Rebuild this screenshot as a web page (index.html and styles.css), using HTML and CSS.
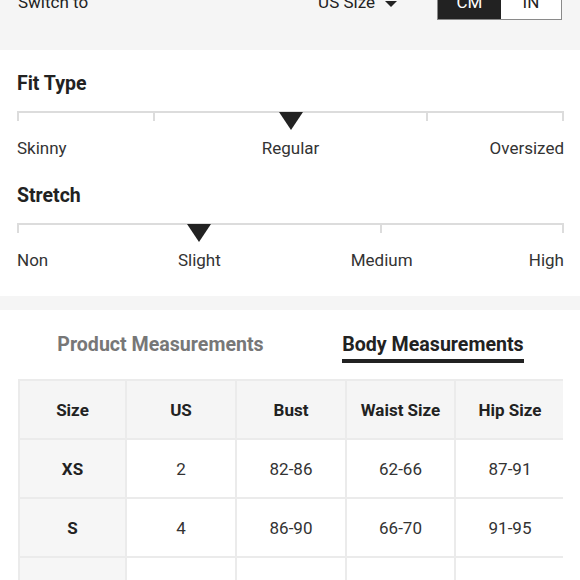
FILE: index.html
```html
<!DOCTYPE html>
<html lang="en">
<head>
<meta charset="utf-8">
<title>Size Guide</title>
<link rel="stylesheet" href="styles.css">
</head>
<body>
<div class="top">
  <div class="switch-row">
    <span class="switch-label">Switch to</span>
    <span class="size-select">US Size <span class="caret"></span></span>
    <div class="unit-toggle">
      <span class="unit unit-active">CM</span>
      <span class="unit">IN</span>
    </div>
  </div>
</div>

<div class="fit">
  <div class="group">
    <h2 class="group-title">Fit Type</h2>
    <div class="track">
      <span class="seg"></span><span class="seg"></span><span class="seg"></span><span class="seg seg-last"></span>
      <span class="marker marker-half"></span>
    </div>
    <div class="labels labels-fit">
      <span class="lbl lbl-start">Skinny</span>
      <span class="lbl lbl-mid2">Regular</span>
      <span class="lbl lbl-end8">Oversized</span>
    </div>
  </div>

  <div class="group">
    <h2 class="group-title">Stretch</h2>
    <div class="track">
      <span class="seg"></span><span class="seg"></span><span class="seg seg-last"></span>
      <span class="marker marker-third"></span>
    </div>
    <div class="labels labels-stretch">
      <span class="lbl lbl-start">Non</span>
      <span class="lbl lbl-s1">Slight</span>
      <span class="lbl lbl-s2">Medium</span>
      <span class="lbl lbl-end6">High</span>
    </div>
  </div>
</div>

<div class="band"></div>

<div class="tabs">
  <span class="tab">Product Measurements</span>
  <span class="tab tab-active">Body Measurements</span>
</div>

<div class="table-wrap">
  <table class="sizes">
    <colgroup>
      <col class="c1"><col class="c2"><col class="c3"><col class="c4"><col class="c5"><col class="c6">
    </colgroup>
    <thead>
      <tr><th>Size</th><th>US</th><th>Bust</th><th>Waist Size</th><th>Hip Size</th><th>Height</th></tr>
    </thead>
    <tbody>
      <tr><th>XS</th><td>2</td><td>82-86</td><td>62-66</td><td>87-91</td><td>160-165</td></tr>
      <tr><th>S</th><td>4</td><td>86-90</td><td>66-70</td><td>91-95</td><td>165-170</td></tr>
      <tr><th>M</th><td>6</td><td>90-94</td><td>70-74</td><td>95-99</td><td>165-170</td></tr>
    </tbody>
  </table>
</div>
</body>
</html>
```

FILE: styles.css
```css
* { box-sizing: border-box; }
html, body { margin: 0; padding: 0; background: #fff; }
body {
  font-family: Roboto, "Liberation Sans", Arial, sans-serif;
  color: #222;
  width: 580px;
  height: 580px;
  overflow: hidden;
}

.top {
  display: flow-root;
  background: #f5f5f5;
  height: 50px;
  padding: 0 18px 0 18px;
}
.switch-row {
  display: flex;
  align-items: center;
  height: 34px;
  margin-top: -15px;
  font-size: 17px;
  color: #222;
}
.switch-label { flex: none; }
.size-select {
  margin-left: auto;
  display: flex;
  align-items: center;
  gap: 10px;
  margin-right: 40px;
}
.caret {
  width: 0; height: 0;
  border-left: 6px solid transparent;
  border-right: 6px solid transparent;
  border-top: 6px solid #222;
  margin-top: 3px;
}
.unit-toggle {
  display: flex;
  height: 35px;
  border: 1px solid #8a8a8a;
  background: #fff;
}
.unit {
  display: flex;
  align-items: center;
  justify-content: center;
  width: 60px;
  font-size: 17px;
  color: #222;
}
.unit-active { background: #222; color: #fff; width: 63px; }

.fit {
  padding: 22px 16px 26px 17px;
}
.group + .group { margin-top: 26px; }
.group-title {
  margin: 0;
  font-size: 19.5px;
  line-height: 24px;
  font-weight: 700;
  color: #222;
}
.track {
  position: relative;
  display: flex;
  margin-top: 15px;
  height: 10px;
}
.seg {
  flex: 1;
  border-top: 2px solid #dcdcdc;
  border-left: 2px solid #dcdcdc;
}
.seg-last { border-right: 2px solid #dcdcdc; }
.marker {
  position: absolute;
  top: 1px;
  width: 0; height: 0;
  border-left: 12.5px solid transparent;
  border-right: 12.5px solid transparent;
  border-top: 18px solid #222;
  transform: translateX(-50%);
}
.marker-half { left: 50%; }
.marker-third { left: 33.333%; }

.labels {
  display: grid;
  margin-top: 17px;
  font-size: 17px;
  line-height: 20px;
  color: #333;
  white-space: nowrap;
}
.labels-fit { grid-template-columns: repeat(8, minmax(0, 1fr)); }
.labels-stretch { grid-template-columns: repeat(6, minmax(0, 1fr)); }
.lbl { grid-row: 1; }
.lbl-start { grid-column: 1 / 2; justify-self: start; }
.lbl-mid2 { grid-column: 4 / 6; justify-self: center; }
.lbl-end8 { grid-column: 8 / 9; justify-self: end; }
.lbl-s1 { grid-column: 2 / 4; justify-self: center; }
.lbl-s2 { grid-column: 4 / 6; justify-self: center; }
.lbl-end6 { grid-column: 6 / 7; justify-self: end; }

.band { height: 14px; background: #f5f5f5; }

.tabs {
  display: flex;
  justify-content: space-around;
  margin: 0 17px 0 18px;
  padding-top: 23px;
}
.tab {
  font-size: 19.6px;
  line-height: 23px;
  font-weight: 700;
  color: #777;
  padding-bottom: 3px;
  border-bottom: 4px solid transparent;
}
.tab-active { color: #222; border-bottom-color: #222; }

.table-wrap {
  margin: 16px 17px 0 18px;
  overflow: hidden;
}
.sizes {
  border-collapse: collapse;
  table-layout: fixed;
  width: 656px;
  font-size: 17px;
}
.c1 { width: 107px; }
.c2 { width: 110px; }
.c3 { width: 110px; }
.c4 { width: 109px; }
.c5 { width: 110px; }
.c6 { width: 110px; }
.sizes th, .sizes td {
  border: 2px solid #ebebeb;
  height: 59px;
  text-align: center;
  vertical-align: middle;
  padding: 0;
}
.sizes thead th { background: #f5f5f5; font-weight: 700; color: #222; }
.sizes tbody th { background: #f6f6f6; font-weight: 700; color: #222; }
.sizes td { color: #333; background: #fff; }
```
